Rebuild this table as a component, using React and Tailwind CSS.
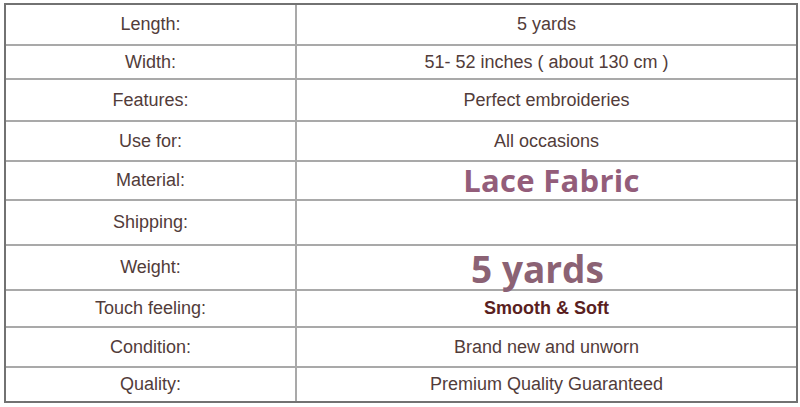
const rows = [
  { label: "Length:", value: "5 yards", h: "h-[39px]" },
  { label: "Width:", value: "51- 52 inches ( about 130 cm )", h: "h-[34px]" },
  { label: "Features:", value: "Perfect embroideries", h: "h-[42px]" },
  { label: "Use for:", value: "All occasions", h: "h-[40px]" },
  { label: "Material:", value: "Lace Fabric", kind: "big", h: "h-[39px]" },
  { label: "Shipping:", value: "", h: "h-[45px]" },
  { label: "Weight:", value: "5 yards", kind: "huge", h: "h-[45px]" },
  { label: "Touch feeling:", value: "Smooth & Soft", kind: "bold", h: "h-[37px]" },
  { label: "Condition:", value: "Brand new and unworn", h: "h-[40px]" },
  { label: "Quality:", value: "Premium Quality Guaranteed", h: "h-[35px]" },
];

const Value = ({ kind, children }) => {
  if (kind === "big") {
    return (
      <span className="ml-[10px] font-['Open_Sans',sans-serif] font-bold text-[31px] tracking-[0.3px] leading-none text-[#935d7a]">
        {children}
      </span>
    );
  }
  if (kind === "huge") {
    return (
      <span className="mr-[18px] font-['Open_Sans',sans-serif] font-bold text-[37px] leading-none text-[#8b6274] pt-[1px]">
        {children}
      </span>
    );
  }
  if (kind === "bold") {
    return <span className="font-bold text-[18px] text-[#5a1f1f]">{children}</span>;
  }
  return <span>{children}</span>;
};

export default function App() {
  return (
    <div className="w-[800px] h-[407px] bg-white pt-[3px] pl-[4px] font-['Liberation_Sans',Arial,sans-serif] text-[18px] text-[#523c3a]">
      <div className="w-[794px] border-2 border-[#727272]">
        {rows.map((r, i) => (
          <div
            key={r.label}
            className={`grid grid-cols-[291px_1fr] ${r.h} ${i > 0 ? "border-t-2 border-[#a9a9a9]" : ""}`}
          >
            <div className="flex items-center justify-center border-r-2 border-[#a9a9a9]">
              {r.label}
            </div>
            <div className="flex items-center justify-center">
              <Value kind={r.kind}>{r.value}</Value>
            </div>
          </div>
        ))}
      </div>
    </div>
  );
}
